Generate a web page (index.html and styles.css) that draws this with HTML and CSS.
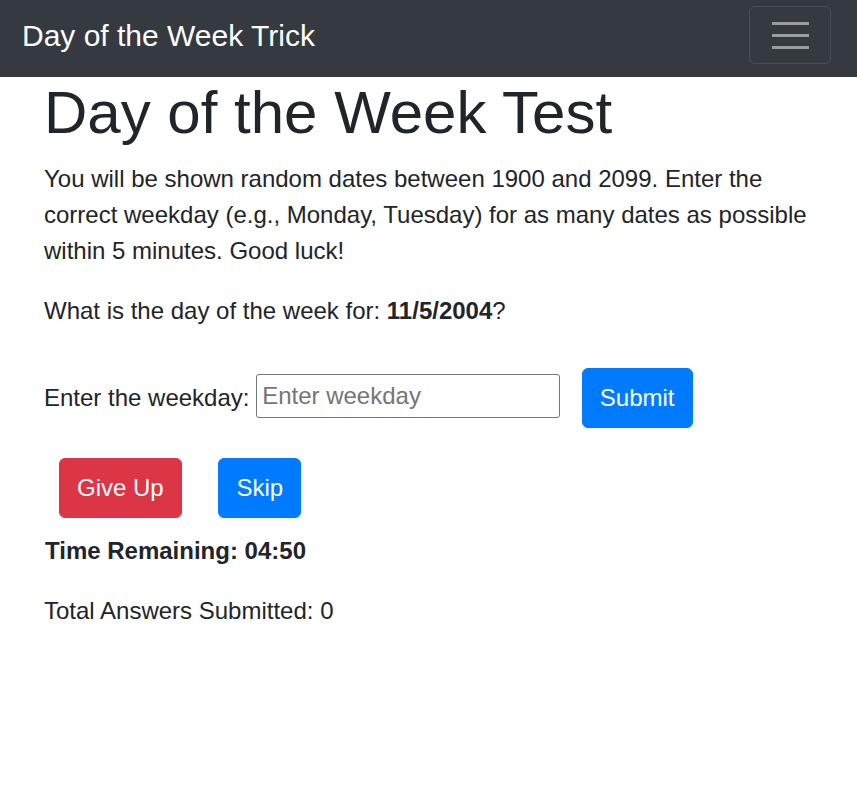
FILE: index.html
```html
<!DOCTYPE html>
<html lang="en">
<head>
<meta charset="utf-8">
<title>Day of the Week Trick</title>
<link rel="stylesheet" href="styles.css">
</head>
<body>
<nav class="navbar">
  <a class="navbar-brand" href="#">Day of the Week Trick</a>
  <button class="navbar-toggler" type="button" aria-label="Toggle navigation">
    <svg class="toggler-icon" width="37" height="27" viewBox="0 0 37 27" aria-hidden="true">
      <path d="M0 1.5h37M0 13.5h37M0 25.5h37" stroke="rgba(255,255,255,0.5)" stroke-width="3"/>
    </svg>
  </button>
</nav>
<main class="container">
  <div class="col">
    <h1 class="title">Day of the Week Test</h1>
    <p class="text">You will be shown random dates between 1900 and 2099. Enter the correct weekday (e.g., Monday, Tuesday) for as many dates as possible within 5 minutes. Good luck!</p>
    <p class="text">What is the day of the week for: <strong>11/5/2004</strong>?</p>
    <form class="answer-form">
      <label class="answer-label" for="weekday">Enter the weekday:</label>
      <input class="answer-input" id="weekday" type="text" placeholder="Enter weekday">
      <button class="btn btn-primary" type="button">Submit</button>
    </form>
    <div class="actions">
      <button class="btn btn-danger" type="button">Give Up</button>
      <button class="btn btn-primary" type="button">Skip</button>
    </div>
    <p class="text timer"><strong>Time Remaining: 04:50</strong></p>
    <p class="text">Total Answers Submitted: 0</p>
  </div>
</main>
</body>
</html>
```

FILE: styles.css
```css
html, body {
  margin: 0;
  padding: 0;
}

body {
  font-family: "Liberation Sans", Arial, Helvetica, sans-serif;
  font-size: 24px;
  line-height: 36px;
  color: #212529;
  background: #ffffff;
}

.navbar {
  box-sizing: border-box;
  height: 77px;
  display: flex;
  align-items: flex-start;
  padding: 6px 26px 0 22px;
  background: #343a40;
}

.navbar-brand {
  display: inline-block;
  padding: 7px 0;
  font-size: 30px;
  line-height: 45px;
  color: #ffffff;
  text-decoration: none;
  white-space: nowrap;
}

.navbar-toggler {
  box-sizing: border-box;
  margin-left: auto;
  width: 82px;
  height: 58px;
  padding: 0;
  display: flex;
  align-items: center;
  justify-content: center;
  background: transparent;
  border: 1px solid rgba(255, 255, 255, 0.1);
  border-radius: 6px;
  cursor: pointer;
}

.toggler-icon {
  display: block;
}

.container {
  padding: 0 22px;
}

.col {
  padding: 0 22px;
}

.title {
  margin: 0 0 12px;
  font-size: 60px;
  font-weight: 400;
  line-height: 72px;
}

.text {
  margin: 0 0 24px;
}

.text strong {
  font-weight: 700;
}

.answer-form {
  margin: 0;
}

.answer-input {
  box-sizing: border-box;
  width: 304px;
  height: 44px;
  padding: 1px 5px;
  font-family: inherit;
  font-size: 24px;
  color: #212529;
  border: 1px solid #767676;
  border-radius: 3px;
  background: #ffffff;
  vertical-align: 2px;
}

.answer-input::placeholder {
  color: #757575;
}

.btn {
  display: inline-block;
  margin: 15px;
  padding: 11px 17px;
  font-family: inherit;
  font-size: 24px;
  line-height: 36px;
  color: #ffffff;
  border: 1px solid transparent;
  border-radius: 6px;
  cursor: pointer;
  vertical-align: baseline;
}

.btn-primary {
  background: #007bff;
  border-color: #007bff;
}

.btn-danger {
  background: #dc3545;
  border-color: #dc3545;
}

.answer-form .btn {
  margin-right: 0;
}

.actions {
  margin: 0;
}

.timer strong {
  padding-left: 1px;
}
```
